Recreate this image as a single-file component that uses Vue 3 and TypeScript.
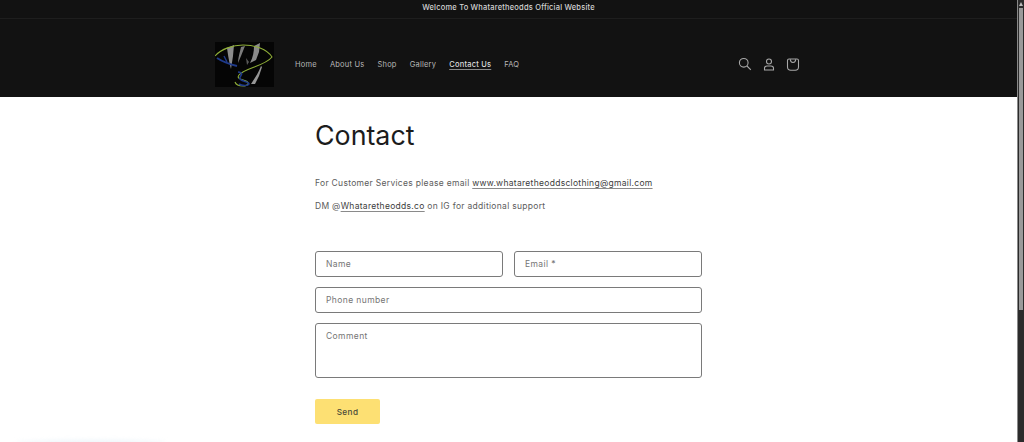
<template>
  <div class="page">
    <div class="content">
      <div class="announcement">Welcome To Whataretheodds Official Website</div>

      <header class="site-header">
        <div class="header-left">
          <svg class="logo" viewBox="0 0 59 45" aria-label="Whataretheodds logo">
            <rect width="59" height="45" fill="#050505" />
            <path d="M12 6 L19 3 L18 14 L16 27 C14 20 13 13 12 6 Z" fill="#8c8c8c" />
            <path d="M26 5 L30 4 L26 14 L23 21 C23 15 25 10 26 5 Z" fill="#7c7c7c" />
            <path d="M39 4 L45 1 L44 10 L41 18 L35 21 C38 15 39 10 39 4 Z" fill="#8a8a8a" />
            <path d="M31 16 L34 20 L32 23 Z" fill="#5a5a5a" />
            <path d="M46 24 L47 25 L44 34 L40 42 L36 42 C40 36 44 30 46 24 Z" fill="#969696" />
            <path d="M0 14 C6 7 18 3 28 3 C40 3 52 7 57 15 C50 24 30 26 24 33 C21 37 27 37 31 39 C35 41 33 44 28 44 C24 44 21 43 20 40" fill="none" stroke="#8fae38" stroke-width="1.1" />
            <path d="M2 16 C8 20 14 22 22 24" fill="none" stroke="#1f3a8a" stroke-width="2" />
            <path d="M9 14 L12 20" fill="none" stroke="#1f3a8a" stroke-width="1.4" />
            <path d="M23 30 C31 31 23 35 25 37 C27 40 34 39 34 42 C33 44 27 44 24 42" fill="none" stroke="#1f3a8a" stroke-width="1.6" />
          </svg>
          <nav class="nav">
            <a v-for="item in navItems" :key="item" class="nav-link" :class="{ active: item === 'Contact Us' }">{{ item }}</a>
          </nav>
        </div>

        <div class="header-icons">
          <svg viewBox="0 0 24 24" class="icon">
            <circle cx="10.5" cy="10.5" r="5.2" />
            <path d="M14.4 14.4 L19 19" />
          </svg>
          <svg viewBox="0 0 24 24" class="icon">
            <circle cx="12" cy="9" r="3" />
            <path d="M6.6 19.2 V17 C6.6 15.4 8 14.4 9.6 14.4 H14.4 C16 14.4 17.4 15.4 17.4 17 V19.2 Z" />
          </svg>
          <svg viewBox="0 0 24 24" class="icon">
            <path d="M7.2 6 H16.8 C18 6 18.6 6.8 18.6 7.8 V15.6 C18.6 18 16.8 19.4 14.6 19.4 H9.4 C7.2 19.4 5.4 18 5.4 15.6 V7.8 C5.4 6.8 6 6 7.2 6 Z" />
            <path d="M8.8 6.4 C8.8 11.4 15.2 11.4 15.2 6.4" />
          </svg>
        </div>
      </header>

      <main class="main">
        <h1 class="title">Contact</h1>
        <p class="line">For Customer Services please email <a class="text-link">www.whataretheoddsclothing@gmail.com</a></p>
        <p class="line">DM @<a class="text-link">Whataretheodds.co</a> on IG for additional support</p>

        <form class="contact-form" @submit.prevent>
          <div class="row">
            <div class="field">Name</div>
            <div class="field">Email *</div>
          </div>
          <div class="field">Phone number</div>
          <div class="field comment">Comment</div>
          <button class="send" type="submit">Send</button>
        </form>
      </main>

      <div class="widget-glow"></div>
    </div>

    <div class="scrollbar">
      <span class="arrow"></span>
      <div class="thumb"></div>
    </div>
  </div>
</template>

<script setup lang="ts">
const navItems: string[] = ['Home', 'About Us', 'Shop', 'Gallery', 'Contact Us', 'FAQ']
</script>

<style>
html, body {
  margin: 0;
  overflow: hidden;
  background: #fff;
}
</style>

<style scoped>
.page {
  display: flex;
  height: 442px;
  overflow: hidden;
  font-family: Inter, "Liberation Sans", sans-serif;
}

.content {
  flex: 1;
  min-width: 0;
  position: relative;
}

.announcement {
  height: 18px;
  background: #121212;
  border-bottom: 1px solid #1e1e1e;
  color: #d4d4d4;
  font-size: 7.5px;
  font-weight: 500;
  letter-spacing: 0.2px;
  line-height: 15px;
  text-align: center;
}

.site-header {
  height: 78px;
  background: #121212;
  padding: 12px 214px 0 215px;
  display: flex;
  justify-content: space-between;
  align-items: center;
  box-sizing: border-box;
}

.header-left {
  display: flex;
  align-items: center;
  gap: 21px;
}

.logo {
  width: 59px;
  height: 45px;
  display: block;
  filter: blur(0.4px);
}

.nav {
  display: flex;
  gap: 13px;
  padding-top: 2px;
}

.nav-link {
  color: #b8b8b8;
  font-size: 7.5px;
  letter-spacing: 0.22px;
  line-height: 12px;
}

.nav-link.active {
  color: #dcdcdc;
  font-weight: 500;
  text-decoration: underline;
  text-decoration-color: #8a8a8a;
  text-underline-offset: 2px;
}

.header-icons {
  display: flex;
  gap: 4px;
}

.icon {
  width: 20px;
  height: 20px;
  fill: none;
  stroke: #a8a8a8;
  stroke-width: 1.3;
}

.main {
  width: 387px;
  margin-left: 315px;
}

.title {
  margin: 0;
  padding-top: 19px;
  color: #1c1c1c;
  font-size: 26.8px;
  font-weight: 400;
  line-height: 38px;
}

.line {
  margin: 0;
  color: #5c5c5c;
  font-size: 8.5px;
  letter-spacing: 0.3px;
  line-height: 14px;
  padding-top: 9px;
}

.main .title + .line {
  padding-top: 22px;
}

.text-link {
  color: #3c3c3c;
  text-decoration: underline;
  text-decoration-color: #8a8a8a;
  text-underline-offset: 2px;
}

.contact-form {
  display: flex;
  flex-direction: column;
  gap: 10px;
  margin-top: 38px;
}

.row {
  display: flex;
  gap: 11px;
}

.row .field {
  flex: 1;
}

.field {
  height: 26px;
  box-sizing: border-box;
  border: 1px solid #7a7a7a;
  border-radius: 3px;
  padding: 0 10px;
  color: #757575;
  font-size: 8.5px;
  letter-spacing: 0.4px;
  line-height: 25px;
}

.comment {
  height: 55px;
  line-height: 24px;
}

.send {
  width: 65px;
  height: 25px;
  margin-top: 11px;
  padding: 0;
  border: none;
  border-radius: 2px;
  background: #fde073;
  color: #4a4a3a;
  font-family: inherit;
  font-size: 8.2px;
  font-weight: 500;
  letter-spacing: 0.4px;
}

.widget-glow {
  position: absolute;
  left: 16px;
  bottom: -4px;
  width: 150px;
  height: 6px;
  border-radius: 50%;
  background: #eef5fa;
  filter: blur(2px);
}

.scrollbar {
  width: 7px;
  background: #2b2b2b;
  position: relative;
  border-left: 1px solid #8a8a8a;
  box-sizing: border-box;
}

.arrow {
  position: absolute;
  top: 2px;
  left: 1px;
  width: 0;
  height: 0;
  border-left: 2px solid transparent;
  border-right: 2px solid transparent;
  border-bottom: 4px solid #bbb;
}

.thumb {
  position: absolute;
  top: 8px;
  left: 1px;
  width: 4px;
  height: 302px;
  background: #9a9a9a;
}
</style>
